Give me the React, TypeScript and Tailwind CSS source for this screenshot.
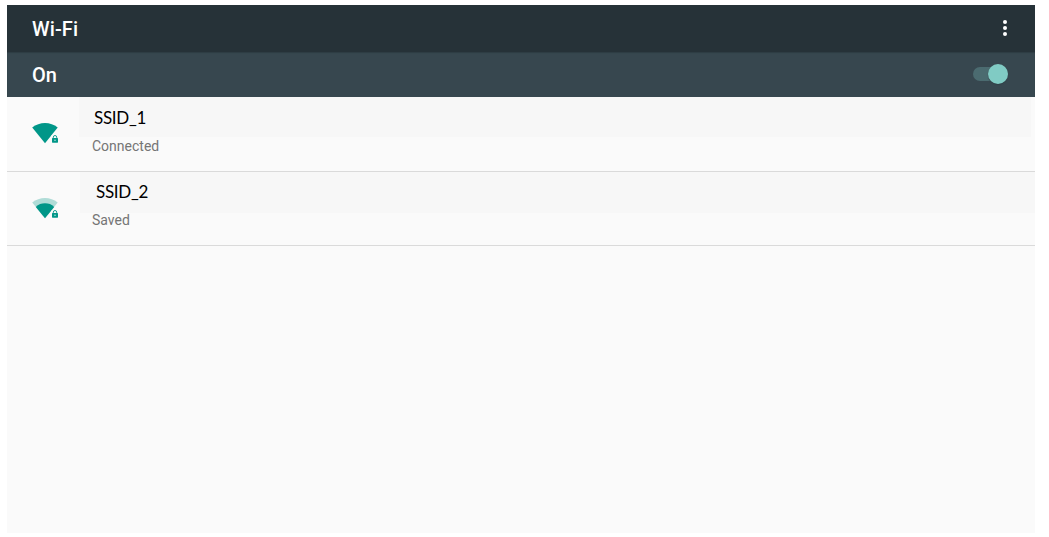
type Network = {
  name: string;
  status: string;
  signal: "full" | "medium";
  rowClass: string;
  nameClass: string;
  statusClass: string;
};

const networks: Network[] = [
  {
    name: "SSID_1",
    status: "Connected",
    signal: "full",
    rowClass: "h-[75px]",
    nameClass: "ml-[72px] mr-1 h-10 pl-[15px] pt-[9px]",
    statusClass: "pt-[1px] pl-[85px]",
  },
  {
    name: "SSID_2",
    status: "Saved",
    signal: "medium",
    rowClass: "h-[74px]",
    nameClass: "ml-[73px] h-[41px] pl-4 pt-2",
    statusClass: "-mt-[1px] pl-[85px]",
  },
];

function WifiIcon({ signal }: { signal: Network["signal"] }) {
  return (
    <svg width="28" height="22" viewBox="0 0 28 22" className="absolute left-[25px] top-[26px]">
      <path
        d="M0.2 4.5C4 1.5 8.3 0 13 0s9 1.5 12.7 4.5L13 20.3Z"
        fill={signal === "full" ? "#009688" : "#b0dcd7"}
      />
      {signal === "medium" && (
        <path d="M3.800 8.900C6.400 6.300 9.500 5.200 13 5.200s6.600 1.100 9.200 3.700L13 20.300Z" fill="#009688" />
      )}
      <path d="M19.300 12.500h7.200v8.500h-7.200z" fill="#fafafa" />
      <path d="M21.300 15.500v-1.300a1.700 1.700 0 0 1 3.400 0v1.300" fill="none" stroke="#009688" strokeWidth="0.900" />
      <rect x="20" y="14.900" width="6" height="4.800" rx="0.600" fill="#009688" />
      <circle cx="23" cy="17.300" r="0.700" fill="#d8efec" />
    </svg>
  );
}

function NetworkRow({ network }: { network: Network }) {
  return (
    <li className={`relative border-b border-[#dadada] ${network.rowClass}`}>
      <WifiIcon signal={network.signal} />
      <div className={`bg-[#f7f7f7] font-['Lato',sans-serif] text-[17px] leading-6 tracking-[-0.3px] text-black ${network.nameClass}`}>
        {network.name}
      </div>
      <div className={`font-['Roboto',sans-serif] text-sm leading-4 text-[#757575] ${network.statusClass}`}>
        {network.status}
      </div>
    </li>
  );
}

export default function App() {
  return (
    <div className="h-[537px] w-[1049px] bg-white pl-[7px] pt-[5px]">
      <main className="h-[528px] w-[1028px] bg-[#fafafa] font-['Roboto',sans-serif]">
        <header className="flex h-[47px] items-center justify-between bg-[#263238] pl-[25px] pr-7">
          <h1 className="text-xl font-medium leading-6 tracking-[0.1px] text-white">Wi-Fi</h1>
          <button aria-label="More options" className="mb-[2px] flex flex-col gap-[2px]">
            <span className="size-1 rounded-full bg-white" />
            <span className="size-1 rounded-full bg-white" />
            <span className="size-1 rounded-full bg-white" />
          </button>
        </header>
        <section className="flex h-[45px] items-center justify-between bg-[#37474f] pl-[25px] pr-[27.500px] shadow-[inset_0_1px_1px_#2e3c43]">
          <span className="text-xl font-medium leading-6 text-white">On</span>
          <button
            role="switch"
            aria-checked="true"
            aria-label="Wi-Fi"
            className="mb-[2px] flex h-[14px] w-[34.500px] items-center justify-end rounded-full bg-[#4b6b70]"
          >
            <span className="size-5 shrink-0 rounded-full bg-[#80cbc4] shadow-[0_1px_1px_#304047]" />
          </button>
        </section>
        <ul>
          {networks.map((network) => (
            <NetworkRow key={network.name} network={network} />
          ))}
        </ul>
      </main>
    </div>
  );
}
